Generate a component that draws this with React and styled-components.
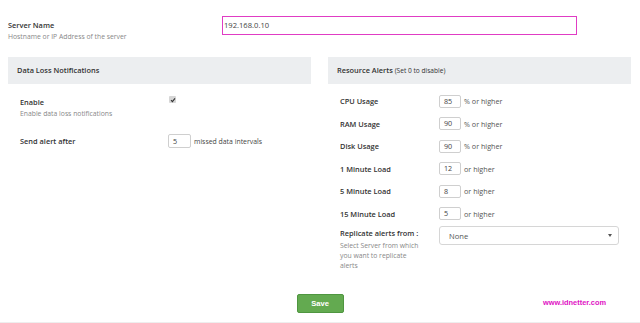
import React from "react";
import styled, { createGlobalStyle } from "styled-components";

const Global = createGlobalStyle`
  html, body { margin: 0; padding: 0; background: #fff; }
  body { font-family: "Open Sans", "Liberation Sans", sans-serif; color: #333; }
  * { box-sizing: border-box; }
`;

const Page = styled.div`
  width: 640px;
  height: 323px;
  padding: 16px 9px 0 8px;
  border-bottom: 1px solid #eeeeee;
  overflow: hidden;
`;

const TopRow = styled.div`
  display: grid;
  grid-template-columns: 214px 355px;
  height: 41px;
`;

const LabelGroup = styled.div`
  padding-top: ${(p) => p.$pt || 0}px;
`;

const Label = styled.div`
  font-size: 7.4px;
  font-weight: 600;
  line-height: 10px;
  color: #333;
  white-space: nowrap;
`;

const Desc = styled.div`
  font-size: 6.8px;
  line-height: 10px;
  color: #888;
  margin-top: ${(p) => p.$mt || 0}px;
  width: ${(p) => p.$w || "auto"};
`;

const MainInput = styled.div`
  height: 19px;
  border: 1.5px solid #e03cc4;
  font-size: 7.6px;
  line-height: 16px;
  padding-left: 1px;
  color: #444;
`;

const Panels = styled.div`
  display: grid;
  grid-template-columns: 303px 303px;
  column-gap: 17px;
`;

const Panel = styled.div``;

const PanelHead = styled.div`
  height: 27px;
  background: #eceef0;
  padding-left: 9px;
  font-size: 7.4px;
  font-weight: 600;
  line-height: 27px;
  color: #333;
`;

const Small = styled.span`
  font-weight: 400;
  font-size: 6.6px;
`;

const Body = styled.div`
  padding: ${(p) => p.$pt}px 12px 0 12px;
`;

const Row = styled.div`
  display: grid;
  grid-template-columns: ${(p) => p.$col}px 1fr;
  align-items: ${(p) => p.$align || "center"};
  height: ${(p) => p.$h}px;
  margin-top: ${(p) => p.$mt || 0}px;
`;

const Field = styled.div`
  display: flex;
  align-items: center;
  gap: 3px;
  font-size: ${(p) => p.$fs || 7.2}px;
  color: ${(p) => p.$color || "#555"};
`;

const SmallInput = styled.div`
  width: ${(p) => p.$w || 22}px;
  height: ${(p) => p.$hh || 13}px;
  border: 1px solid #cfcfcf;
  border-radius: 2px;
  font-size: 7.2px;
  line-height: ${(p) => (p.$hh || 13) - 2}px;
  padding-left: 4px;
  color: #444;
`;

const Check = styled.div`
  width: 7px;
  height: 7px;
  background: #d6d6d6;
  border-radius: 1px;
  display: flex;
  align-items: center;
  justify-content: center;
  margin-top: -1px;
`;

const Select = styled.div`
  height: 19px;
  border: 1px solid #d6d6d6;
  border-radius: 3px;
  display: flex;
  align-items: center;
  justify-content: space-between;
  padding: 0 6px 0 9px;
  font-size: 7.6px;
  color: #555;
  margin-top: -2px;
`;

const Caret = styled.span`
  width: 0;
  height: 0;
  border-left: 2px solid transparent;
  border-right: 2px solid transparent;
  border-top: 3px solid #555;
`;

const Footer = styled.div`
  position: relative;
  display: flex;
  justify-content: center;
  margin-top: ${(p) => p.$mt}px;
`;

const SaveButton = styled.button`
  width: 47px;
  height: 19px;
  background: #63aa50;
  border: 1px solid #4f9640;
  border-radius: 2px;
  color: #fff;
  font-family: "Liberation Sans", Arial, sans-serif;
  font-weight: 700;
  font-size: 7.6px;
  padding: 0;
  margin-left: 1px;
`;

const Brand = styled.div`
  position: absolute;
  left: 535px;
  top: 4px;
  font-family: "Liberation Sans", Arial, sans-serif;
  font-weight: 700;
  font-size: 7.4px;
  color: #e012c4;
`;

const alerts = [
  ["CPU Usage", "85", "% or higher"],
  ["RAM Usage", "90", "% or higher"],
  ["Disk Usage", "90", "% or higher"],
  ["1 Minute Load", "12", "or higher"],
  ["5 Minute Load", "8", "or higher"],
  ["15 Minute Load", "5", "or higher"],
];

export default function App() {
  return (
    <>
      <Global />
      <Page>
        <TopRow>
          <LabelGroup $pt={4}>
            <Label>Server Name</Label>
            <Desc $mt={2}>Hostname or IP Address of the server</Desc>
          </LabelGroup>
          <MainInput>192.168.0.10</MainInput>
        </TopRow>
        <Panels>
          <Panel>
            <PanelHead>Data Loss Notifications</PanelHead>
            <Body $pt={13}>
              <Row $col={149} $h={37} $align="start">
                <div>
                  <Label>Enable</Label>
                  <Desc $mt={2}>Enable data loss notifications</Desc>
                </div>
                <Check>
                  <svg width="6" height="6" viewBox="0 0 6 6">
                    <path d="M1 3.2 L2.4 4.6 L5 1.4" stroke="#333" strokeWidth="1.1" fill="none" />
                  </svg>
                </Check>
              </Row>
              <Row $col={148} $h={14}>
                <Label>Send alert after</Label>
                <Field $fs={6.9} $color="#444">
                  <SmallInput $w={23} $hh={14}>5</SmallInput>
                  <span>missed data intervals</span>
                </Field>
              </Row>
            </Body>
          </Panel>
          <Panel>
            <PanelHead>
              Resource Alerts <Small>(Set 0 to disable)</Small>
            </PanelHead>
            <Body $pt={6}>
              {alerts.map(([l, v, s]) => (
                <Row key={l} $col={99} $h={22.5}>
                  <Label>{l}</Label>
                  <Field>
                    <SmallInput>{v}</SmallInput>
                    <span>{s}</span>
                  </Field>
                </Row>
              ))}
              <Row $col={99} $h={46} $align="start" $mt={3}>
                <div>
                  <Label>Replicate alerts from :</Label>
                  <Desc $mt={3} $w="84px">
                    Select Server from which you want to replicate alerts
                  </Desc>
                </div>
                <Select>
                  <span>None</span>
                  <Caret />
                </Select>
              </Row>
            </Body>
          </Panel>
        </Panels>
        <Footer $mt={20}>
          <SaveButton>Save</SaveButton>
          <Brand>www.idnetter.com</Brand>
        </Footer>
      </Page>
    </>
  );
}
